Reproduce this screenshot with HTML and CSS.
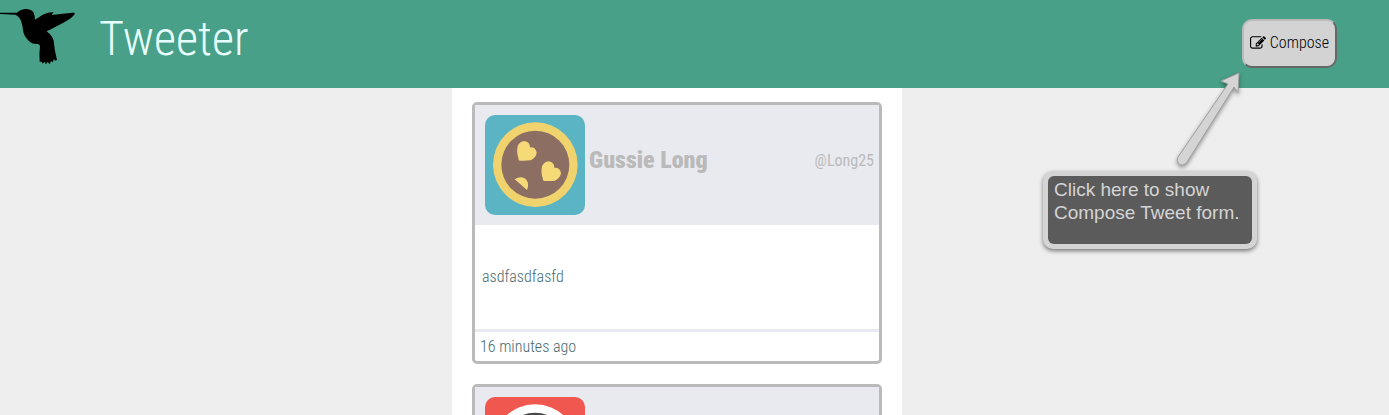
FILE: index.html
```html
<!DOCTYPE html>
<html lang="en">
<head>
<meta charset="utf-8">
<title>Tweeter</title>
<link rel="stylesheet" href="styles.css">
</head>
<body>
<header class="nav">
  <a class="brand" href="#">
    <svg class="bird" viewBox="0 0 240 204" aria-hidden="true"><path d="M0 38 L50 38 Q60 29 74 27 Q94 26 101 38 Q105 48 105 59 L128 44 Q144 36 161 36 L155 45 Q190 40 218 38 Q226 37 224 43 Q212 58 190 68 Q168 79 153 88 Q146 91 140 94 Q158 108 161 122 Q163 148 171 180 L165 182 L162 177 L158 187 L153 183 L149 193 L143 186 L138 193 L133 185 L128 191 L125 185 L119 185 Q117 162 120 137 L115 132 Q99 134 89 125 Q74 112 70 96 Q68 76 63 62 Q57 48 46 44 L0 42 Z"/></svg>
    <span class="brand-name">Tweeter</span>
  </a>
  <button class="compose" type="button">
    <svg class="edit" viewBox="0 0 1792 1792" aria-hidden="true"><path d="M888 1184l116-116-152-152-116 116v56h96v96h56zm440-720q-16-16-33 1l-350 350q-17 17-1 33t33-1l350-350q17-17 1-33zm80 594v190q0 119-84.500 203.500t-203.500 84.500h-832q-119 0-203.500-84.500t-84.500-203.500v-832q0-119 84.500-203.500t203.500-84.500h832q63 0 117 25 15 7 18 23 3 17-9 29l-49 49q-14 14-32 8-23-6-45-6h-832q-66 0-113 47t-47 113v832q0 66 47 113t113 47h832q66 0 113-47t47-113v-126q0-13 9-22l64-64q15-15 35-7t20 29zm-96-738l288 288-672 672h-288v-288zm444 132l-92 92-288-288 92-92q28-28 68-28t68 28l152 152q28 28 28 68t-28 68z"/></svg>
    <span>Compose</span>
  </button>
  <div class="tip" role="note">
    <svg class="arrow" viewBox="0 0 90 110" aria-hidden="true"><path d="M13 92 L63 19 L56 16 L74 8 L73 28 L69 22 L22 97 Q18 102 14 99 Q11 96 13 92 Z"/></svg>
    <p class="tip-text">Click here to show Compose Tweet form.</p>
  </div>
</header>
<main class="feed">
  <section class="column">
    <article class="tweet">
      <header class="tweet-head">
        <svg class="avatar" viewBox="0 0 300 300" role="img" aria-label="Avatar">
          <rect width="300" height="300" fill="#5ab4c4"/>
          <circle cx="151" cy="149" r="127" fill="#f1d36d"/>
          <circle cx="151" cy="149" r="102" fill="#8d6e63"/>
          <g fill="#f7da78">
            <path id="heart" d="M104 137 Q100 136 100 128 Q94 112 98 93 Q104 79 118 78 Q135 81 135 97 Q152 96 155 113 Q154 127 137 136 Q120 138 104 137Z"/>
            <use href="#heart" x="73" y="61"/>
            <path d="M89 193 Q109 181 123 193 Q134 207 126 225 Z"/>
          </g>
        </svg>
        <h2 class="name">Gussie Long</h2>
        <span class="handle">@Long25</span>
      </header>
      <p class="body">asdfasdfasfd</p>
      <footer class="tweet-foot">16 minutes ago</footer>
    </article>
    <article class="tweet">
      <header class="tweet-head">
        <svg class="avatar" viewBox="0 0 300 300" role="img" aria-label="Avatar">
          <rect width="300" height="300" fill="#f0574f"/>
          <circle cx="150" cy="149" r="127" fill="#fff"/>
          <circle cx="150" cy="149" r="102" fill="#4b4747"/>
        </svg>
      </header>
    </article>
  </section>
</main>
</body>
</html>
```
FILE: styles.css
```css
* {
  box-sizing: border-box;
}

body {
  display: flex;
  flex-direction: column;
  height: 100vh;
  margin: 0;
  overflow: hidden;
  background: #eee;
  color: #466a72;
  font: 300 16px/20px "Roboto Condensed", Roboto, sans-serif;
}

.nav {
  position: relative;
  display: flex;
  flex-shrink: 0;
  justify-content: space-between;
  align-items: flex-start;
  height: 88px;
  padding-right: 52px;
  background: #49a088;
}

.brand {
  display: flex;
  gap: 19px;
  color: #e8ffff;
  text-decoration: none;
}

.bird {
  width: 80px;
  height: 68px;
  fill: #000;
}

.brand-name {
  padding-top: 9px;
  font-size: 48px;
  line-height: 60px;
}

.compose {
  display: flex;
  align-items: center;
  gap: 4px;
  height: 49px;
  margin-top: 19px;
  padding: 0 6px 2px;
  border: 2px outset #bbb;
  border-radius: 10px;
  background: #d3d3d3;
  color: #000;
  font: inherit;
}

.edit {
  width: 16px;
  height: 16px;
}

.tip {
  position: absolute;
  z-index: 1;
  top: 171px;
  right: 132px;
  width: 214px;
  height: 78px;
  border: 5px solid #d4d4d4;
  border-radius: 10px;
  background: #d4d4d4;
  box-shadow: 0 2px 4px rgba(0, 0, 0, 0.5);
}

.tip-text {
  height: 68px;
  margin: 0;
  padding: 2px 6px;
  border-radius: 6px;
  background: #5b5b5b;
  color: #d4d4d4;
  font: 19px/23px "Liberation Sans", sans-serif;
}

.arrow {
  position: absolute;
  right: -3px;
  bottom: 69px;
  width: 90px;
  height: 110px;
  fill: #d4d4d4;
  stroke: #a0a0a0;
  filter: drop-shadow(0 2px 2px rgba(0, 0, 0, 0.4));
}

.feed {
  display: flex;
  flex: 1;
  justify-content: center;
  min-height: 0;
  padding-right: 35px;
  overflow: hidden;
}

.column {
  display: flex;
  flex-direction: column;
  gap: 20px;
  width: 100%;
  max-width: 450px;
  padding: 14px 20px;
  background: #fff;
}

.tweet {
  flex-shrink: 0;
  border: 3px solid #bababa;
  border-radius: 5px;
  background: #fff;
}

.tweet-head {
  display: flex;
  align-items: center;
  gap: 4px;
  padding: 10px 5px 10px 10px;
  background: #e9eaf0;
  color: #bababa;
}

.avatar {
  width: 100px;
  height: 100px;
  border-radius: 10px;
}

.name {
  margin: 0;
  padding-bottom: 10px;
  font-size: 24px;
  font-weight: 900;
  line-height: 30px;
}

.handle {
  margin-left: auto;
  padding-bottom: 8px;
  font-weight: 400;
}

.body {
  margin: 0;
  padding: 42px 7px;
}

.tweet-foot {
  padding: 5px 5px 4px;
  border-top: 3px solid #e9eaf0;
}
```
